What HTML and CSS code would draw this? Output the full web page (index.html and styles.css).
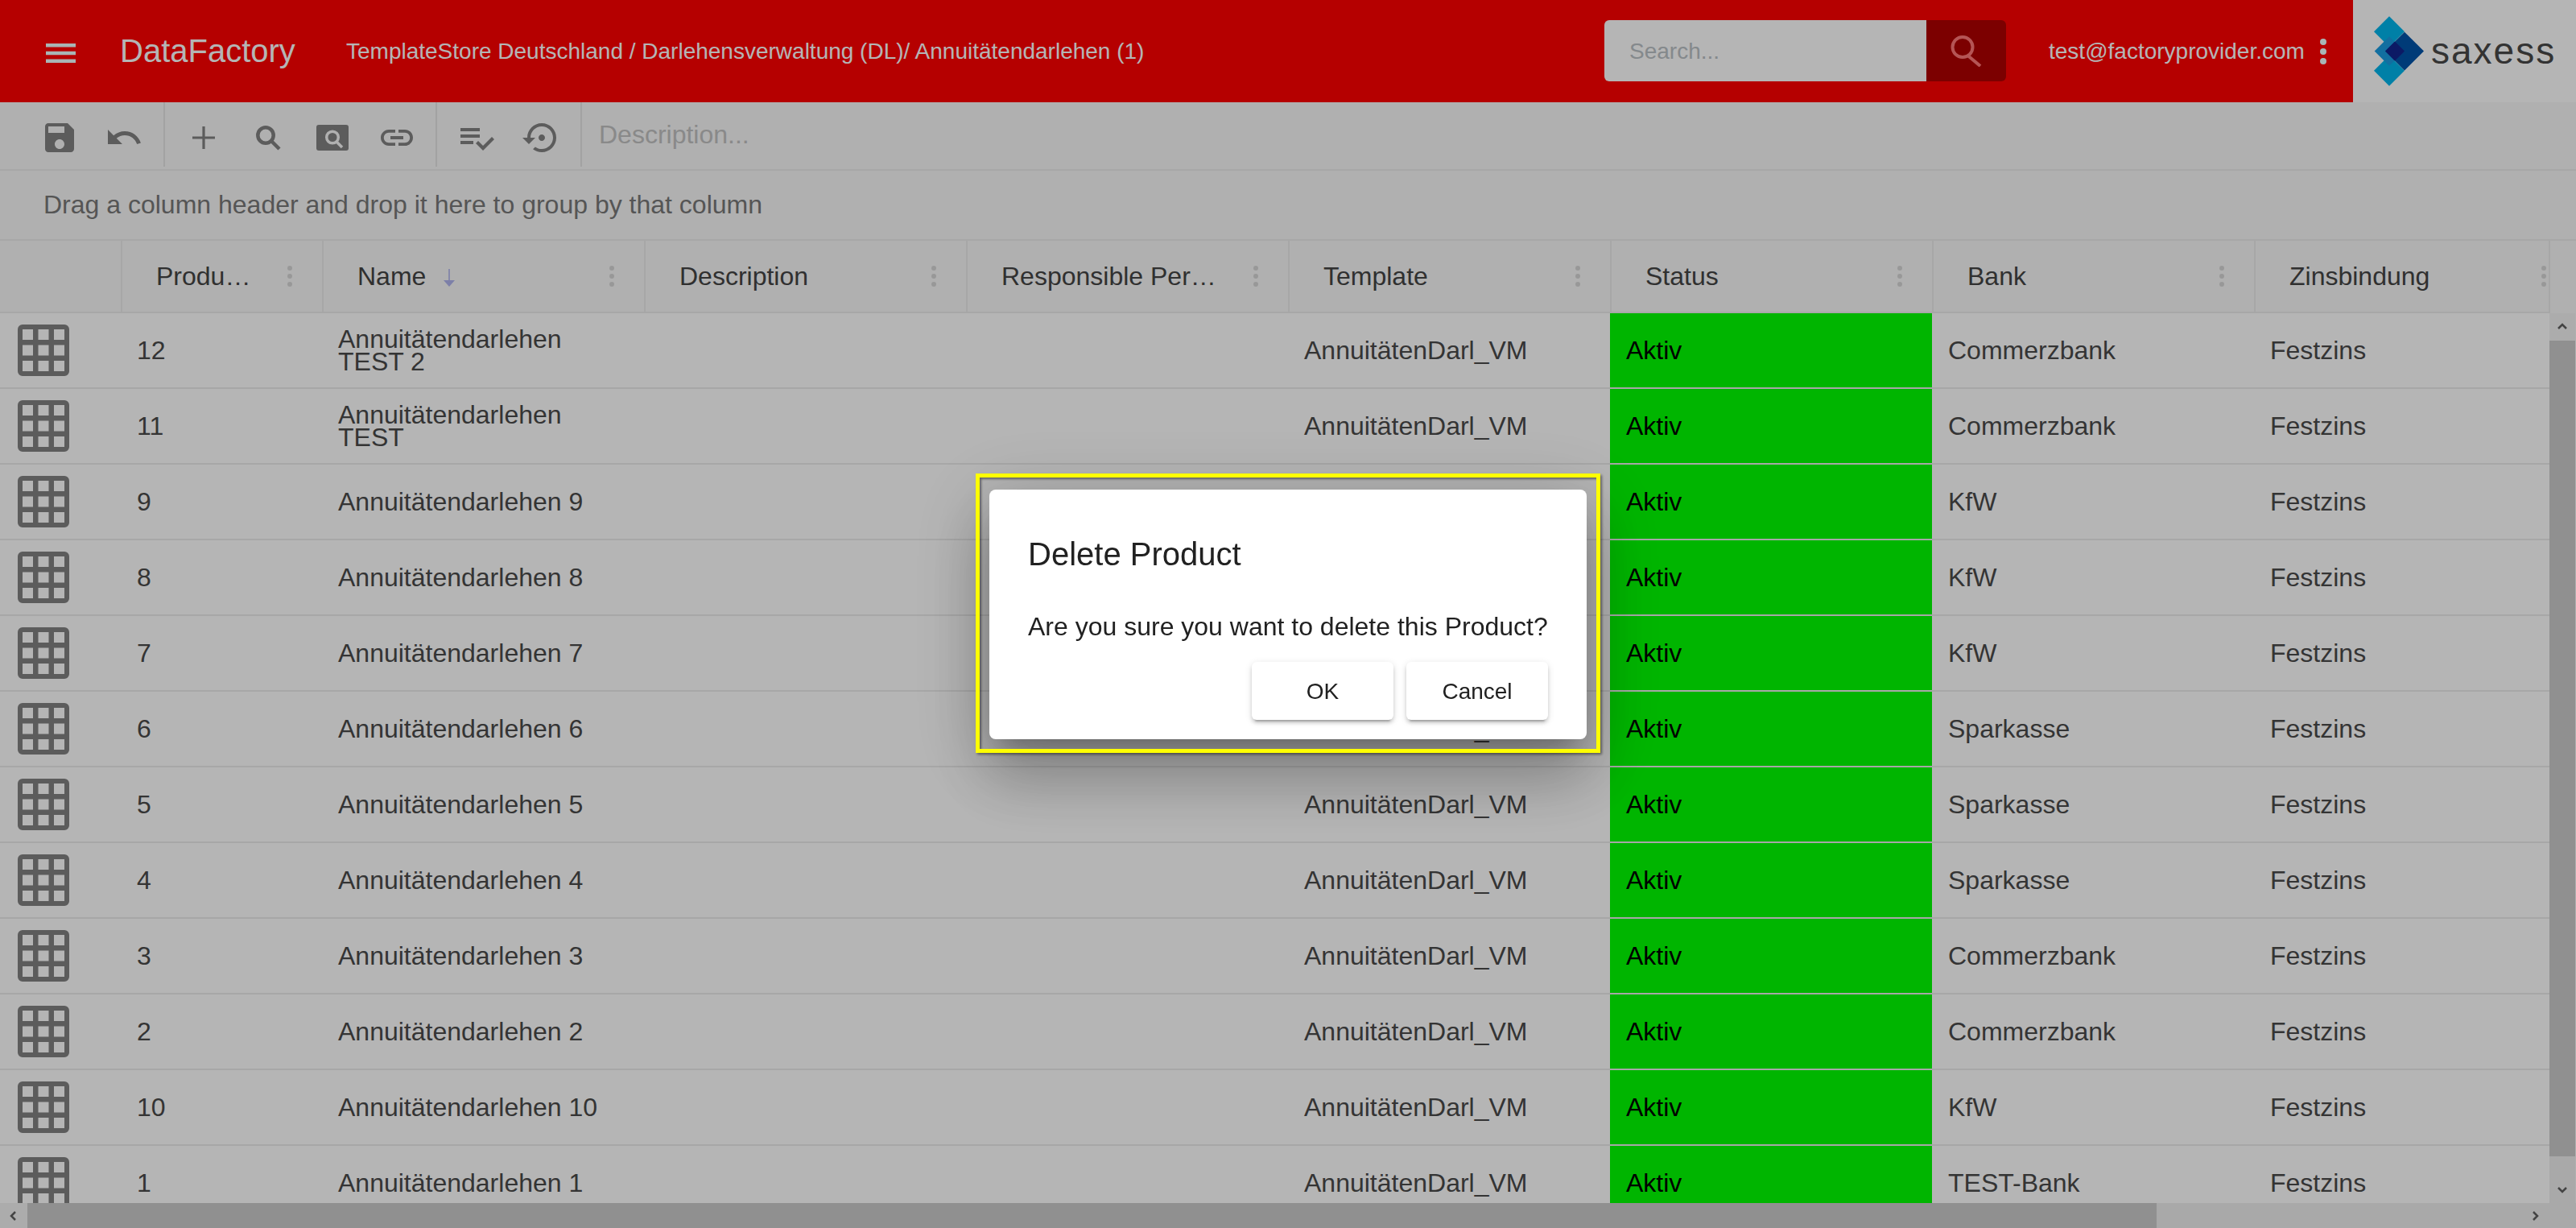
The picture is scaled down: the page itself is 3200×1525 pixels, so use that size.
FILE: index.html
```html
<!DOCTYPE html>
<html lang="en">
<head>
    <meta charset="UTF-8">
    <title>DataFactory</title>
    <link rel="stylesheet" href="styles.css">
</head>
<body>
    <svg class="sprites">
        <symbol id="dots" viewBox="0 0 6 26"><circle cx="3" cy="3" r="3"/><circle cx="3" cy="13" r="3"/><circle cx="3" cy="23" r="3"/></symbol>
        <symbol id="table" viewBox="0 0 64 64"><path fill-rule="evenodd" d="M6 0h52a6 6 0 0 1 6 6v52a6 6 0 0 1-6 6H6a6 6 0 0 1-6-6V6a6 6 0 0 1 6-6zM6 6v13h13V6zM25.500 6v13h13V6zM45 6v13h13V6zM6 25.500v13h13v-13zM25.500 25.500v13h13v-13zM45 25.500v13h13v-13zM6 45v13h13V45zM25.500 45v13h13V45zM45 45v13h13V45z"/></symbol>
    </svg>

    <header class="topbar">
        <svg class="burger" viewBox="0 0 37 24"><path d="M0 0h37v4.500H0zM0 9.750h37v4.500H0zM0 19.500h37V24H0z"/></svg>
        <div class="brand">DataFactory</div>
        <div class="crumbs">TemplateStore Deutschland / Darlehensverwaltung (DL)/ Annuitätendarlehen (1)</div>
        <div class="search">
            <input class="search-input" type="text" placeholder="Search...">
            <button class="search-btn" type="button">
                <svg viewBox="0 0 39 39"><circle cx="15" cy="14.500" r="12.500"/><path d="M21.500 25L37 38"/></svg>
            </button>
        </div>
        <div class="user">test@factoryprovider.com</div>
        <svg class="user-menu" viewBox="0 0 8 32"><circle cx="4" cy="4" r="4"/><circle cx="4" cy="16" r="4"/><circle cx="4" cy="28" r="4"/></svg>
        <div class="logo">
            <svg class="logo-mark" viewBox="208 56 186 260">
                <polygon fill="#00b5ec" points="265,56 322,113 265,170 208,113"/>
                <polygon fill="#00b5ec" points="265,202 322,259 265,316 208,259"/>
                <polygon fill="#1a9de2" points="265,131 320,186 265,241 210,186"/>
                <polygon fill="#0054a9" points="322,115 394,186 322,258 250,186"/>
                <polygon fill="#12258f" points="286,150 322,186 286,222 250,186"/>
            </svg>
            <span class="logo-text">saxess</span>
        </div>
    </header>

    <div class="toolbar">
        <div class="tool-group first">
            <svg class="icon" viewBox="0 0 24 24"><path d="M17 3H5c-1.110 0-2 .9-2 2v14c0 1.100.89 2 2 2h14c1.100 0 2-.9 2-2V7l-4-4zm-5 16c-1.660 0-3-1.340-3-3s1.340-3 3-3 3 1.340 3 3-1.340 3-3 3zm3-10H5V5h10v4z"/></svg>
            <svg class="icon" viewBox="0 0 24 24"><path d="M12.500 8c-2.650 0-5.050.99-6.900 2.600L2 7v9h9l-3.620-3.620c1.390-1.160 3.160-1.880 5.120-1.880 3.540 0 6.550 2.310 7.600 5.500l2.370-.78C21.080 11.030 17.150 8 12.500 8z"/></svg>
        </div>
        <div class="tool-group second">
            <svg class="icon" viewBox="0 0 24 24"><path d="M19 12.800h-6.200V19h-1.600v-6.200H5v-1.600h6.200V5h1.600v6.200H19z"/></svg>
            <svg class="icon" viewBox="0 0 48 48"><circle class="lens" cx="21" cy="21" r="9.700"/><path class="lens" d="M28 28l10 10"/></svg>
            <svg class="icon" viewBox="0 0 48 48"><rect x="4" y="8" width="40" height="32" rx="3"/><circle class="lens-in" cx="24" cy="23.500" r="7.300"/><path class="lens-in" d="M29 29l7 7"/></svg>
            <svg class="icon" viewBox="0 0 24 24"><path d="M3.900 12c0-1.710 1.390-3.100 3.100-3.100h4V7H7c-2.760 0-5 2.240-5 5s2.240 5 5 5h4v-1.900H7c-1.710 0-3.100-1.390-3.100-3.100zM8 13h8v-2H8v2zm9-6h-4v1.900h4c1.710 0 3.100 1.390 3.100 3.100s-1.390 3.100-3.100 3.100h-4V17h4c2.760 0 5-2.240 5-5s-2.240-5-5-5z"/></svg>
        </div>
        <div class="tool-group third">
            <svg class="icon" viewBox="0 0 24 24"><path d="M14 10H2v2h12v-2zm0-4H2v2h12V6zM2 16h8v-2H2v2zm19.500-4.500L23 13l-6.990 7-4.510-4.500L13 14l3.010 3 5.490-5.500z"/></svg>
            <svg class="icon" viewBox="0 0 24 24"><path d="M14 12c0-1.100-.9-2-2-2s-2 .9-2 2 .9 2 2 2 2-.9 2-2zm-2-9c-4.970 0-9 4.030-9 9H0l4 4 4-4H5c0-3.870 3.130-7 7-7s7 3.130 7 7-3.130 7-7 7c-1.510 0-2.910-.49-4.060-1.300l-1.420 1.440C8.040 20.300 9.940 21 12 21c4.970 0 9-4.030 9-9s-4.030-9-9-9z"/></svg>
        </div>
        <input class="description" type="text" placeholder="Description...">
    </div>

    <div class="group-panel">Drag a column header and drop it here to group by that column</div>

    <div class="grid-head">
        <div class="head-cell"></div>
        <div class="head-cell"><span class="head-label">Produ…</span><svg class="col-menu"><use href="#dots"/></svg></div>
        <div class="head-cell"><span class="head-label">Name<svg class="sort" viewBox="0 0 14 22"><path d="M6.200 0h1.600v14H14l-7 8-7-8h6.200z"/></svg></span><svg class="col-menu"><use href="#dots"/></svg></div>
        <div class="head-cell"><span class="head-label">Description</span><svg class="col-menu"><use href="#dots"/></svg></div>
        <div class="head-cell"><span class="head-label">Responsible Per…</span><svg class="col-menu"><use href="#dots"/></svg></div>
        <div class="head-cell"><span class="head-label">Template</span><svg class="col-menu"><use href="#dots"/></svg></div>
        <div class="head-cell"><span class="head-label">Status</span><svg class="col-menu"><use href="#dots"/></svg></div>
        <div class="head-cell"><span class="head-label">Bank</span><svg class="col-menu"><use href="#dots"/></svg></div>
        <div class="head-cell last"><span class="head-label">Zinsbindung</span><svg class="col-menu"><use href="#dots"/></svg></div>
    </div>

    <div class="grid-main">
        <div class="grid-rows">
            <div class="row">
                <div class="cell icon-cell"><svg class="grid-icon"><use href="#table"/></svg></div>
                <div class="cell">12</div><div class="cell">Annuitätendarlehen TEST 2</div><div class="cell"></div><div class="cell"></div>
                <div class="cell">AnnuitätenDarl_VM</div><div class="cell status">Aktiv</div><div class="cell">Commerzbank</div><div class="cell">Festzins</div>
            </div>
            <div class="row">
                <div class="cell icon-cell"><svg class="grid-icon"><use href="#table"/></svg></div>
                <div class="cell">11</div><div class="cell">Annuitätendarlehen TEST</div><div class="cell"></div><div class="cell"></div>
                <div class="cell">AnnuitätenDarl_VM</div><div class="cell status">Aktiv</div><div class="cell">Commerzbank</div><div class="cell">Festzins</div>
            </div>
            <div class="row">
                <div class="cell icon-cell"><svg class="grid-icon"><use href="#table"/></svg></div>
                <div class="cell">9</div><div class="cell">Annuitätendarlehen 9</div><div class="cell"></div><div class="cell"></div>
                <div class="cell">AnnuitätenDarl_VM</div><div class="cell status">Aktiv</div><div class="cell">KfW</div><div class="cell">Festzins</div>
            </div>
            <div class="row">
                <div class="cell icon-cell"><svg class="grid-icon"><use href="#table"/></svg></div>
                <div class="cell">8</div><div class="cell">Annuitätendarlehen 8</div><div class="cell"></div><div class="cell"></div>
                <div class="cell">AnnuitätenDarl_VM</div><div class="cell status">Aktiv</div><div class="cell">KfW</div><div class="cell">Festzins</div>
            </div>
            <div class="row">
                <div class="cell icon-cell"><svg class="grid-icon"><use href="#table"/></svg></div>
                <div class="cell">7</div><div class="cell">Annuitätendarlehen 7</div><div class="cell"></div><div class="cell"></div>
                <div class="cell">AnnuitätenDarl_VM</div><div class="cell status">Aktiv</div><div class="cell">KfW</div><div class="cell">Festzins</div>
            </div>
            <div class="row">
                <div class="cell icon-cell"><svg class="grid-icon"><use href="#table"/></svg></div>
                <div class="cell">6</div><div class="cell">Annuitätendarlehen 6</div><div class="cell"></div><div class="cell"></div>
                <div class="cell">AnnuitätenDarl_VM</div><div class="cell status">Aktiv</div><div class="cell">Sparkasse</div><div class="cell">Festzins</div>
            </div>
            <div class="row">
                <div class="cell icon-cell"><svg class="grid-icon"><use href="#table"/></svg></div>
                <div class="cell">5</div><div class="cell">Annuitätendarlehen 5</div><div class="cell"></div><div class="cell"></div>
                <div class="cell">AnnuitätenDarl_VM</div><div class="cell status">Aktiv</div><div class="cell">Sparkasse</div><div class="cell">Festzins</div>
            </div>
            <div class="row">
                <div class="cell icon-cell"><svg class="grid-icon"><use href="#table"/></svg></div>
                <div class="cell">4</div><div class="cell">Annuitätendarlehen 4</div><div class="cell"></div><div class="cell"></div>
                <div class="cell">AnnuitätenDarl_VM</div><div class="cell status">Aktiv</div><div class="cell">Sparkasse</div><div class="cell">Festzins</div>
            </div>
            <div class="row">
                <div class="cell icon-cell"><svg class="grid-icon"><use href="#table"/></svg></div>
                <div class="cell">3</div><div class="cell">Annuitätendarlehen 3</div><div class="cell"></div><div class="cell"></div>
                <div class="cell">AnnuitätenDarl_VM</div><div class="cell status">Aktiv</div><div class="cell">Commerzbank</div><div class="cell">Festzins</div>
            </div>
            <div class="row">
                <div class="cell icon-cell"><svg class="grid-icon"><use href="#table"/></svg></div>
                <div class="cell">2</div><div class="cell">Annuitätendarlehen 2</div><div class="cell"></div><div class="cell"></div>
                <div class="cell">AnnuitätenDarl_VM</div><div class="cell status">Aktiv</div><div class="cell">Commerzbank</div><div class="cell">Festzins</div>
            </div>
            <div class="row">
                <div class="cell icon-cell"><svg class="grid-icon"><use href="#table"/></svg></div>
                <div class="cell">10</div><div class="cell">Annuitätendarlehen 10</div><div class="cell"></div><div class="cell"></div>
                <div class="cell">AnnuitätenDarl_VM</div><div class="cell status">Aktiv</div><div class="cell">KfW</div><div class="cell">Festzins</div>
            </div>
            <div class="row">
                <div class="cell icon-cell"><svg class="grid-icon"><use href="#table"/></svg></div>
                <div class="cell">1</div><div class="cell">Annuitätendarlehen 1</div><div class="cell"></div><div class="cell"></div>
                <div class="cell">AnnuitätenDarl_VM</div><div class="cell status">Aktiv</div><div class="cell">TEST-Bank</div><div class="cell">Festzins</div>
            </div>
        </div>
        <div class="vscroll">
            <div class="arrow-box top"><svg viewBox="0 0 12 12"><path d="M1 8l5-5 5 5"/></svg></div>
            <div class="vthumb"></div>
            <div class="arrow-box bottom"><svg viewBox="0 0 12 12"><path d="M1 4l5 5 5-5"/></svg></div>
        </div>
    </div>

    <div class="hscroll">
        <div class="arrow-box left"><svg viewBox="0 0 12 12"><path d="M8 1L3 6l5 5"/></svg></div>
        <div class="hthumb"></div>
        <div class="htrack"></div>
        <div class="arrow-box right"><svg viewBox="0 0 12 12"><path d="M4 1l5 5-5 5"/></svg></div>
        <div class="corner"></div>
    </div>

    <div class="overlay">
        <div class="dialog">
            <div class="dialog-frame"></div>
            <h2 class="dialog-title">Delete Product</h2>
            <p class="dialog-text">Are you sure you want to delete this Product?</p>
            <div class="dialog-actions">
                <button class="dialog-btn" type="button">OK</button>
                <button class="dialog-btn" type="button">Cancel</button>
            </div>
        </div>
    </div>
</body>
</html>
```

FILE: styles.css
```css
* { box-sizing: border-box; }
html, body { height: 100%; }
body {
    margin: 0;
    display: flex;
    flex-direction: column;
    overflow: hidden;
    background: #f8f8f8;
    font-family: "Liberation Sans", Arial, sans-serif;
    font-size: 32px;
    color: #4a4a4a;
}
.sprites { display: none; }

/* top bar */
.topbar {
    flex: none;
    height: 127px;
    display: flex;
    align-items: center;
    background: #ff0000;
    color: white;
    font-size: 28px;
}
.burger { width: 37px; height: 24px; margin-left: 57px; margin-top: 4px; fill: #eeffff; }
.brand { margin-left: 55px; width: 281px; font-size: 40px; }
.crumbs { white-space: nowrap; }
.search { margin-left: auto; display: flex; height: 76px; margin-top: -1px; }
.search-input {
    width: 400px;
    height: 76px;
    border: none;
    border-radius: 6px 0 0 6px;
    padding: 2px 31px 0;
    font: 28px "Liberation Sans", Arial, sans-serif;
    outline: none;
}
.search-input::placeholder { color: #bbc1c5; opacity: 1; }
.search-btn {
    width: 99px;
    height: 76px;
    padding: 0;
    border: none;
    border-radius: 0 6px 6px 0;
    background: #af0000;
    display: flex;
    align-items: center;
    justify-content: center;
}
.search-btn svg { width: 39px; height: 39px; fill: none; stroke: #ff7878; stroke-width: 4; }
.user { margin-left: 53px; width: 317px; white-space: nowrap; }
.user-menu { width: 8px; height: 32px; margin-left: 20px; margin-right: 33px; fill: #eeffff; }
.logo {
    flex: none;
    width: 277px;
    height: 127px;
    background: white;
    display: flex;
    align-items: center;
    padding-left: 26px;
}
.logo-mark { width: 62px; height: 87px; }
.logo-text { margin-left: 9px; margin-top: -2px; font-size: 46px; letter-spacing: 2px; color: #484848; }

/* toolbar */
.toolbar {
    flex: none;
    height: 85px;
    display: flex;
    background: #f8f8f8;
    border-bottom: 2px solid #ebebeb;
    padding-bottom: 3px;
}
.tool-group {
    display: flex;
    align-items: center;
    gap: 32px;
    border-right: 2px solid #e4e4e4;
    padding-top: 8px;
}
.tool-group.first { padding-left: 50px; padding-right: 25px; width: 205px; }
.tool-group.second { padding-left: 24px; padding-right: 24px; width: 338px; }
.tool-group.third { padding-left: 25px; padding-right: 24px; width: 180px; gap: 33px; }
.icon { width: 48px; height: 48px; fill: #828282; }
.lens { fill: none; stroke: #828282; stroke-width: 4.500; }
.lens-in { fill: none; stroke: #f8f8f8; stroke-width: 3.500; }
.description {
    flex: 1;
    border: none;
    background: transparent;
    padding: 0 0 0 21px;
    font: 32px "Liberation Sans", Arial, sans-serif;
    outline: none;
}
.description::placeholder { color: #c2c2c2; opacity: 1; }

/* group panel */
.group-panel {
    flex: none;
    height: 87px;
    padding-left: 54px;
    display: flex;
    align-items: center;
    background: #f8f8f8;
    border-bottom: 2px solid #ebebeb;
    color: #787878;
}

/* grid */
.grid-head {
    flex: none;
    width: 3168px;
    height: 90px;
    display: grid;
    grid-template-columns: 150px 250px repeat(7, 400px);
    overflow: hidden;
    background: #f8f8f8;
    border-bottom: 2px solid #ebebeb;
    border-right: 2px solid #ebebeb;
    color: #444444;
}
.head-cell {
    display: flex;
    align-items: center;
    padding-left: 42px;
    border-left: 2px solid #ebebeb;
}
.head-cell:first-child { border-left: none; }
.head-label {
    flex: 1;
    min-width: 0;
    white-space: nowrap;
    overflow: hidden;
    margin-right: 37px;
}
.col-menu { flex: none; width: 6px; height: 26px; margin-right: 37px; fill: #d7d7d7; }
.sort { width: 14px; height: 22px; margin-left: 22px; vertical-align: -2px; fill: #afb4ed; }

.grid-main { flex: 1; min-height: 0; display: flex; }
.grid-rows { flex: 1; min-width: 0; overflow: hidden; background: white; }
.row {
    height: 94px;
    display: grid;
    grid-template-columns: 150px 250px repeat(7, 400px);
    border-bottom: 2px solid #ebebeb;
}
.cell {
    display: flex;
    align-items: center;
    padding: 0 20px;
    line-height: 28px;
}
.icon-cell { padding: 0 0 0 22px; }
.grid-icon { width: 64px; height: 64px; fill: #828282; }
.status { background: #00ff00; color: black; }

/* scrollbars */
.vscroll {
    flex: none;
    width: 33px;
    display: flex;
    flex-direction: column;
    background: #eeeeee;
    border-right: 1px solid #f8f8f8;
}
.vthumb { height: 1013px; background: #cbcbcb; }
.arrow-box {
    display: flex;
    align-items: center;
    justify-content: center;
    background: #f2f2f2;
}
.arrow-box svg { width: 12px; height: 12px; fill: none; stroke: #606060; stroke-width: 2.500; }
.arrow-box.top { height: 34px; flex: none; }
.arrow-box.bottom { margin-top: auto; height: 34px; background: none; }
.hscroll { flex: none; height: 31px; display: flex; background: #eeeeee; }
.arrow-box.left { width: 34px; }
.arrow-box.right { width: 37px; background: none; }
.hthumb { width: 2645px; background: #cbcbcb; }
.htrack { flex: 1; }
.corner { width: 33px; }

/* modal */
.overlay {
    position: fixed;
    inset: 0;
    display: flex;
    align-items: center;
    justify-content: center;
    background: rgba(0, 0, 0, 0.29);
}
.dialog {
    position: relative;
    width: 742px;
    padding: 48px 48px 24px;
    background: white;
    border-radius: 8px;
    color: #212121;
    box-shadow: 0 22px 30px -14px rgba(0,0,0,.24), 0 48px 76px 6px rgba(0,0,0,.18), 0 18px 92px 16px rgba(0,0,0,.16);
}
.dialog-frame {
    position: absolute;
    inset: -20px -17px -17px;
    border: 5px solid #ffff00;
    box-shadow: 2px 2px 3px rgba(0,0,0,.45), inset 2px 2px 3px rgba(0,0,0,.45);
}
.dialog-title { margin: 0 0 38px; font-size: 40px; font-weight: normal; line-height: 64px; }
.dialog-text { margin: 0 0 24px; line-height: 40px; white-space: nowrap; }
.dialog-actions { display: flex; justify-content: flex-end; gap: 16px; }
.dialog-btn {
    width: 176px;
    height: 72px;
    padding: 2px 0 0;
    border: none;
    border-radius: 6px;
    background: white;
    color: #212121;
    font: 28px "Liberation Sans", Arial, sans-serif;
    box-shadow: 0 6px 2px -4px rgba(0,0,0,.2), 0 4px 4px 0 rgba(0,0,0,.14), 0 2px 10px 0 rgba(0,0,0,.12);
}
```
